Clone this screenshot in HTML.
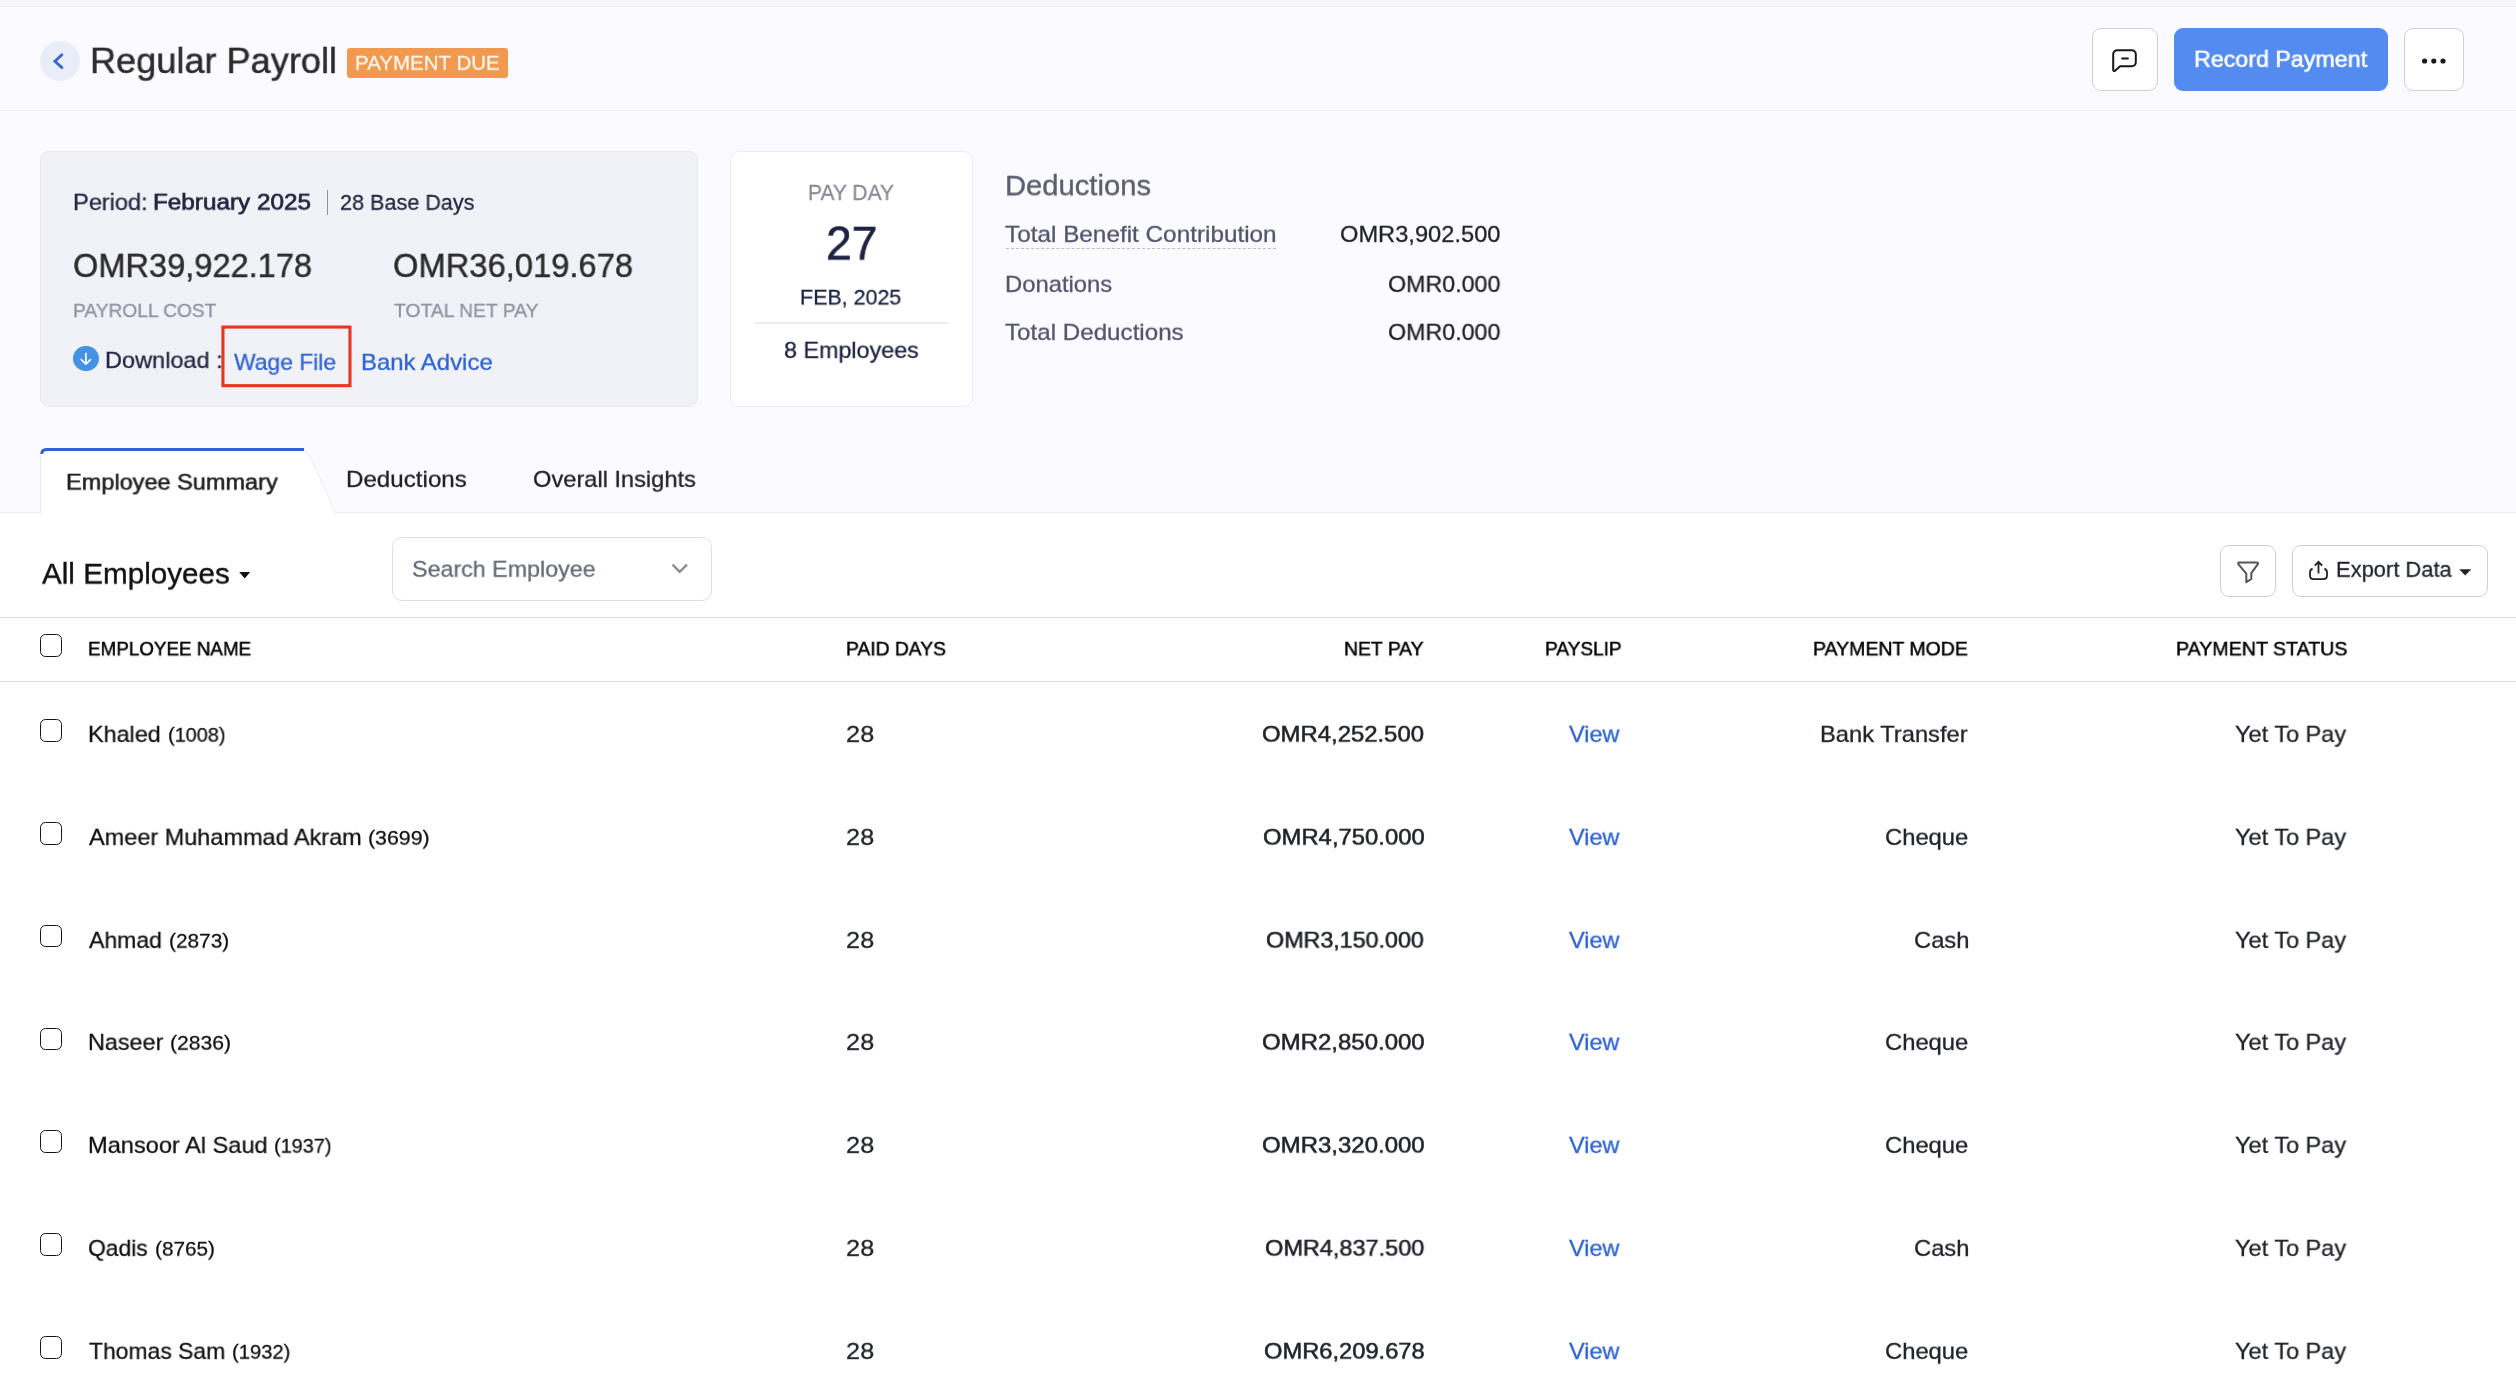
<!DOCTYPE html>
<html lang="en"><head><meta charset="utf-8"><title>Regular Payroll</title>
<style>
html,body{margin:0;padding:0;background:#fbfaff}
body{width:2516px;height:1396px;position:relative;overflow:hidden;font-family:"Liberation Sans",sans-serif}
.t{position:absolute;white-space:nowrap;line-height:1;display:inline-block;transform-origin:0 0;will-change:transform}
.a{position:absolute;box-sizing:border-box}
.cb{position:absolute;left:39.9px;width:21.9px;height:22.7px;box-sizing:border-box;border:1.7px solid #151515;border-radius:5.5px;background:#fff}
.btn{position:absolute;box-sizing:border-box;background:#fff;border:1.5px solid #cfcfd2;border-radius:9px}
svg{position:absolute;overflow:visible}
</style></head><body>
<div class="a" style="left:0;top:0;width:2516px;height:7px;background:#f6f6fb;border-bottom:1px solid #ececee"></div>
<div class="a" style="left:0;top:7px;width:2516px;height:1px;background:#fefeff"></div>
<div class="a" style="left:0;top:109px;width:2516px;height:3px;background:#fefeff"></div>
<div class="a" style="left:0;top:110px;width:2516px;height:1px;background:#ececec"></div>
<div class="a" style="left:40px;top:41px;width:40px;height:40px;border-radius:50%;background:#e8edf9"></div>
<svg style="left:40px;top:41px" width="40" height="40" viewBox="0 0 40 40"><path d="M21.9 13.7 L14.9 20.2 L21.9 26.6" fill="none" stroke="#3468d0" stroke-width="2.8" stroke-linecap="round" stroke-linejoin="miter"/></svg>
<div class="a" style="left:347px;top:48px;width:161px;height:30px;border-radius:3px;background:#f0994f"></div>
<div class="btn" style="left:2092px;top:28px;width:66px;height:63px"></div>
<svg style="left:2112px;top:49px" width="25" height="24" viewBox="0 0 25 24"><path d="M5.2 1.2 H19.8 a4 4 0 0 1 4 4 V13.2 a4 4 0 0 1 -4 4 H8.2 L3.2 21.6 Q1.2 22.8 1.2 20.4 V5.2 a4 4 0 0 1 4 -4 Z M10.2 9.6 H15.9" fill="none" stroke="#14171d" stroke-width="2" stroke-linecap="round" stroke-linejoin="round"/></svg>
<div class="a" style="left:2174px;top:28px;width:214px;height:63px;border-radius:9px;background:#538bf1"></div>
<div class="btn" style="left:2404px;top:28px;width:60px;height:63px"></div>
<svg style="left:2420px;top:55px" width="28" height="12" viewBox="0 0 28 12"><circle cx="4.6" cy="6" r="2.6" fill="#1a1a1a"/><circle cx="13.8" cy="6" r="2.6" fill="#1a1a1a"/><circle cx="23" cy="6" r="2.6" fill="#1a1a1a"/></svg>

<div class="a" style="left:40px;top:151px;width:657.6px;height:255.6px;border-radius:9px;background:#f1f2f8;border:1px solid #e8e9f0"></div>
<div class="a" style="left:327px;top:190px;width:1.3px;height:25px;background:#8f92a0"></div>
<div class="a" style="left:73px;top:345.8px;width:25.6px;height:25.6px;border-radius:50%;background:#4392e4"></div>
<svg style="left:73px;top:345.8px" width="25.6" height="25.6" viewBox="0 0 25.6 25.6"><path d="M12.9 7.4 V17.8 M8.3 13.6 L12.9 18.2 L17.5 13.6" fill="none" stroke="#fff" stroke-width="1.7" stroke-linecap="round" stroke-linejoin="round"/></svg>
<svg style="left:215px;top:320px" width="145" height="75" viewBox="215 320 145 75"><rect x="222.95" y="327.05" width="127" height="58.6" fill="none" stroke="#e8371b" stroke-width="3.1"/></svg>

<div class="a" style="left:730px;top:151px;width:242.6px;height:255.6px;border-radius:9px;background:#fff;border:1px solid #ececf3"></div>
<div class="a" style="left:755px;top:322px;width:193px;height:2px;background:#ececef"></div>
<div class="a" style="left:1005.5px;top:247.5px;width:270px;height:0;border-top:1.3px dashed #b9bccb"></div>

<div class="a" style="left:0;top:512px;width:2516px;height:884px;background:#fff;border-top:1px solid #ebebec"></div>
<svg style="left:0;top:440px" width="400" height="80" viewBox="0 440 400 80">
<path d="M40.3 513.2 V453 Q40.3 448 45.3 448 H304 V451 Q308.6 452.4 310.6 457.6 L335.2 512.4 V513.2 Z" fill="#fff"/>
<path d="M304 451.2 Q308.6 452.4 310.6 457.6 L335.2 512.4" fill="none" stroke="#ebebef" stroke-width="0.9"/>
<path d="M40.8 513 V454" fill="none" stroke="#e3e3e6" stroke-width="1"/>
<path d="M41.8 454 Q41.8 449.5 46.3 449.5 H304" fill="none" stroke="#2e62d6" stroke-width="3"/>
</svg>
<svg style="left:238.7px;top:571.7px" width="11.4" height="6.8" viewBox="0 0 11.4 6.8"><path d="M0.2 0.1 H11.2 L5.7 6.6 Z" fill="#111"/></svg>
<div class="a" style="left:392px;top:537px;width:320px;height:64px;border-radius:10px;background:#fff;border:1.5px solid #dddfe7"></div>
<svg style="left:670px;top:562px" width="20" height="14" viewBox="0 0 20 14"><path d="M2.6 2.6 L9.7 9.8 L16.9 2.6" fill="none" stroke="#8c8c8c" stroke-width="2.3"/></svg>
<div class="btn" style="left:2220px;top:545px;width:56px;height:52px"></div>
<svg style="left:2236px;top:560px" width="24" height="24" viewBox="0 0 24 24"><path d="M3.2 2.4 H20.8 Q22.6 2.6 21.8 4.2 L15.3 13.2 V19 L10.3 22.2 V13.6 L2.3 4.2 Q1.6 2.6 3.2 2.4 Z" fill="none" stroke="#555" stroke-width="2" stroke-linejoin="round"/></svg>
<div class="btn" style="left:2292px;top:545px;width:196px;height:52px"></div>
<svg style="left:2308px;top:560px" width="22" height="22" viewBox="0 0 22 22"><path d="M10.5 13.5 V1.8 M6.8 5.6 L10.5 1.8 L14.2 5.6 M4.6 8.6 Q2 9.6 2 12.4 V15.6 Q2 19.2 5.6 19.2 H15.4 Q19 19.2 19 15.6 V12.4 Q19 9.6 16.4 8.6" fill="none" stroke="#1f242c" stroke-width="1.8" stroke-linecap="butt" stroke-linejoin="miter"/></svg>
<svg style="left:2459px;top:569px" width="13" height="7" viewBox="0 0 13 7"><path d="M0.2 0.2 H12.2 L6.2 6.6 Z" fill="#1f242c"/></svg>
<div class="a" style="left:0;top:617px;width:2516px;height:1px;background:#dddddd"></div>
<div class="a" style="left:0;top:681px;width:2516px;height:1px;background:#dddddd"></div>
<div class="cb" style="top:634.1px"></div>
<div class="cb" style="top:719.10px"></div>
<div class="cb" style="top:821.93px"></div>
<div class="cb" style="top:924.76px"></div>
<div class="cb" style="top:1027.59px"></div>
<div class="cb" style="top:1130.42px"></div>
<div class="cb" style="top:1233.25px"></div>
<div class="cb" style="top:1336.08px"></div>
<span class="t" id="title" style="left:89.80px;top:42.58px;font-size:37.2px;color:#2c2c2c;-webkit-text-stroke:0.49px #2c2c2c;transform:scale(0.9715,0.9660);">Regular Payroll</span>
<span class="t" id="badge" style="left:354.94px;top:53.20px;font-size:20.29px;color:#fff5ea;-webkit-text-stroke:0.27px #fff5ea;transform:scale(1.0111,0.9782);">PAYMENT DUE</span>
<span class="t" id="recpay" style="left:2193.75px;top:47.78px;font-size:24.09px;color:#ffffff;-webkit-text-stroke:0.59px #ffffff;transform:scale(0.9653,0.9423);">Record Payment</span>
<span class="t" id="period" style="left:72.59px;top:190.82px;font-size:23.88px;color:#23273f;letter-spacing:-0.043px;-webkit-text-stroke:0.32px #23273f;transform:scale(0.9895,0.9486);">Period:</span>
<span class="t" id="feb" style="left:153.44px;top:191.29px;font-size:23.88px;color:#23273f;-webkit-text-stroke:0.75px #23273f;transform:scale(1.0172,0.9256);">February 2025</span>
<span class="t" id="base" style="left:339.86px;top:191.60px;font-size:21.98px;color:#23273f;-webkit-text-stroke:0.29px #23273f;transform:scale(0.9833,0.9890);">28 Base Days</span>
<span class="t" id="amt1" style="left:72.63px;top:248.92px;font-size:34.34px;color:#2c2c2c;-webkit-text-stroke:0.46px #2c2c2c;transform:scale(0.9491,0.9660);">OMR39,922.178</span>
<span class="t" id="amt2" style="left:392.63px;top:248.92px;font-size:34.34px;color:#2c2c2c;-webkit-text-stroke:0.46px #2c2c2c;transform:scale(0.9531,0.9660);">OMR36,019.678</span>
<span class="t" id="lbl1" style="left:72.69px;top:301.56px;font-size:19.44px;color:#8c90a0;-webkit-text-stroke:0.26px #8c90a0;transform:scale(0.9858,0.9381);">PAYROLL COST</span>
<span class="t" id="lbl2" style="left:393.68px;top:301.56px;font-size:19.44px;color:#8c90a0;-webkit-text-stroke:0.26px #8c90a0;transform:scale(0.9935,0.9381);">TOTAL NET PAY</span>
<span class="t" id="dl" style="left:105.25px;top:349.53px;font-size:23.67px;color:#23273f;letter-spacing:-0.012px;-webkit-text-stroke:0.31px #23273f;transform:scale(0.9950,0.9408);">Download :</span>
<span class="t" id="wage" style="left:234.15px;top:351.53px;font-size:23.67px;color:#2f64d6;letter-spacing:-0.016px;-webkit-text-stroke:0.31px #2f64d6;transform:scale(0.9680,0.9408);">Wage File</span>
<span class="t" id="bank" style="left:361.27px;top:351.53px;font-size:23.67px;color:#2f64d6;-webkit-text-stroke:0.31px #2f64d6;transform:scale(1.0116,0.9408);">Bank Advice</span>
<span class="t" id="payday" style="left:808.02px;top:181.59px;font-size:22.19px;color:#868b97;-webkit-text-stroke:0.29px #868b97;transform:scale(0.9469,0.9985);">PAY DAY</span>
<span class="t" id="d27" style="left:825.74px;top:219.31px;font-size:48.31px;color:#1c2242;-webkit-text-stroke:0.64px #1c2242;transform:scale(0.9579,0.9881);">27</span>
<span class="t" id="febd" style="left:799.80px;top:287.00px;font-size:21.56px;color:#1c2242;letter-spacing:-0.031px;-webkit-text-stroke:0.29px #1c2242;transform:scale(0.9963,0.9700);">FEB, 2025</span>
<span class="t" id="emp8" style="left:783.91px;top:339.93px;font-size:23.67px;color:#1c2242;letter-spacing:-0.011px;-webkit-text-stroke:0.31px #1c2242;transform:scale(0.9866,0.9408);">8 Employees</span>
<span class="t" id="dedh" style="left:1004.71px;top:172.39px;font-size:28.74px;color:#5c5f6f;-webkit-text-stroke:0.38px #5c5f6f;transform:scale(1.0155,0.9703);">Deductions</span>
<span class="t" id="tbc" style="left:1005.05px;top:223.85px;font-size:23.67px;color:#52566c;-webkit-text-stroke:0.31px #52566c;transform:scale(1.0276,0.9408);">Total Benefit Contribution</span>
<span class="t" id="don" style="left:1004.87px;top:273.93px;font-size:23.67px;color:#52566c;-webkit-text-stroke:0.31px #52566c;transform:scale(1.0067,0.9408);">Donations</span>
<span class="t" id="tded" style="left:1005.05px;top:321.93px;font-size:23.67px;color:#52566c;-webkit-text-stroke:0.31px #52566c;transform:scale(1.0216,0.9408);">Total Deductions</span>
<span class="t" id="v1" style="left:1339.85px;top:223.85px;font-size:23.67px;color:#1f2229;-webkit-text-stroke:0.31px #1f2229;transform:scale(1.0004,0.9408);">OMR3,902.500</span>
<span class="t" id="v2" style="left:1387.94px;top:273.93px;font-size:23.67px;color:#1f2229;letter-spacing:-0.041px;-webkit-text-stroke:0.31px #1f2229;transform:scale(0.9850,0.9408);">OMR0.000</span>
<span class="t" id="v3" style="left:1387.94px;top:321.93px;font-size:23.67px;color:#1f2229;letter-spacing:-0.041px;-webkit-text-stroke:0.31px #1f2229;transform:scale(0.9850,0.9408);">OMR0.000</span>
<span class="t" id="tab1" style="left:65.99px;top:471.70px;font-size:23.67px;color:#222222;-webkit-text-stroke:0.58px #222222;transform:scale(0.9938,0.9263);">Employee Summary</span>
<span class="t" id="tab2" style="left:345.67px;top:468.93px;font-size:23.67px;color:#222222;letter-spacing:0.020px;-webkit-text-stroke:0.31px #222222;transform:scale(1.0196,0.9408);">Deductions</span>
<span class="t" id="tab3" style="left:532.85px;top:468.93px;font-size:23.67px;color:#222222;-webkit-text-stroke:0.31px #222222;transform:scale(0.9987,0.9408);">Overall Insights</span>
<span class="t" id="allemp" style="left:41.67px;top:560.11px;font-size:29.16px;color:#111111;-webkit-text-stroke:0.39px #111111;transform:scale(1.0166,0.9841);">All Employees</span>
<span class="t" id="search" style="left:411.92px;top:558.91px;font-size:23.46px;color:#636a76;-webkit-text-stroke:0.31px #636a76;transform:scale(0.9921,0.9324);">Search Employee</span>
<span class="t" id="export" style="left:2336.44px;top:559.30px;font-size:21.98px;color:#1f242c;-webkit-text-stroke:0.29px #1f242c;transform:scale(0.9972,0.9890);">Export Data</span>
<span class="t" id="h1" style="left:88.07px;top:639.47px;font-size:20.29px;color:#000;-webkit-text-stroke:0.5px #000;transform:scale(0.9280,0.9626);">EMPLOYEE NAME</span>
<span class="t" id="h2" style="left:845.67px;top:639.47px;font-size:20.29px;color:#000;-webkit-text-stroke:0.5px #000;transform:scale(0.9490,0.9626);">PAID DAYS</span>
<span class="t" id="h3" style="left:1344.22px;top:639.47px;font-size:20.29px;color:#000;letter-spacing:-0.046px;-webkit-text-stroke:0.5px #000;transform:scale(0.9579,0.9626);">NET PAY</span>
<span class="t" id="h4" style="left:1544.52px;top:639.47px;font-size:20.29px;color:#000;letter-spacing:-0.026px;-webkit-text-stroke:0.5px #000;transform:scale(0.9422,0.9626);">PAYSLIP</span>
<span class="t" id="h5" style="left:1813.16px;top:639.47px;font-size:20.29px;color:#000;letter-spacing:-0.013px;-webkit-text-stroke:0.5px #000;transform:scale(0.9616,0.9626);">PAYMENT MODE</span>
<span class="t" id="h6" style="left:2176.07px;top:639.47px;font-size:20.29px;color:#000;-webkit-text-stroke:0.5px #000;transform:scale(0.9671,0.9626);">PAYMENT STATUS</span>
<span class="t" id="n0" style="left:88.33px;top:723.93px;font-size:23.67px;color:#111111;letter-spacing:0.009px;-webkit-text-stroke:0.31px #111111;transform:scale(0.9870,0.9408);">Khaled</span>
<span class="t" id="i0" style="left:167.80px;top:725.20px;font-size:20.29px;color:#111111;letter-spacing:-0.082px;-webkit-text-stroke:0.27px #111111;transform:scale(0.9876,0.9782);">(1008)</span>
<span class="t" id="p0" style="left:845.65px;top:723.93px;font-size:23.67px;color:#20242b;letter-spacing:0.287px;-webkit-text-stroke:0.31px #20242b;transform:scale(1.0676,0.9408);">28</span>
<span class="t" id="a0" style="left:1261.92px;top:724.30px;font-size:23.67px;color:#20242b;letter-spacing:-0.019px;-webkit-text-stroke:0.58px #20242b;transform:scale(1.0109,0.9263);">OMR4,252.500</span>
<span class="t" id="w0" style="left:1569.45px;top:723.93px;font-size:23.67px;color:#2f64d6;letter-spacing:-0.066px;-webkit-text-stroke:0.31px #2f64d6;transform:scale(0.9952,0.9408);">View</span>
<span class="t" id="m0" style="left:1820.27px;top:723.93px;font-size:23.67px;color:#20242b;-webkit-text-stroke:0.31px #20242b;transform:scale(1.0025,0.9408);">Bank Transfer</span>
<span class="t" id="s0" style="left:2235.27px;top:723.93px;font-size:23.67px;color:#20242b;letter-spacing:-0.025px;-webkit-text-stroke:0.31px #20242b;transform:scale(0.9958,0.9408);">Yet To Pay</span>
<span class="t" id="n1" style="left:89.02px;top:826.93px;font-size:23.67px;color:#111111;-webkit-text-stroke:0.31px #111111;transform:scale(0.9925,0.9408);">Ameer Muhammad Akram</span>
<span class="t" id="i1" style="left:368.01px;top:828.20px;font-size:20.29px;color:#111111;letter-spacing:-0.023px;-webkit-text-stroke:0.27px #111111;transform:scale(1.0543,0.9782);">(3699)</span>
<span class="t" id="p1" style="left:845.65px;top:826.93px;font-size:23.67px;color:#20242b;letter-spacing:0.287px;-webkit-text-stroke:0.31px #20242b;transform:scale(1.0676,0.9408);">28</span>
<span class="t" id="a1" style="left:1262.72px;top:827.30px;font-size:23.67px;color:#20242b;letter-spacing:0.009px;-webkit-text-stroke:0.58px #20242b;transform:scale(1.0072,0.9263);">OMR4,750.000</span>
<span class="t" id="w1" style="left:1569.45px;top:826.93px;font-size:23.67px;color:#2f64d6;letter-spacing:-0.066px;-webkit-text-stroke:0.31px #2f64d6;transform:scale(0.9952,0.9408);">View</span>
<span class="t" id="m1" style="left:1885.08px;top:826.93px;font-size:23.67px;color:#20242b;letter-spacing:-0.029px;-webkit-text-stroke:0.31px #20242b;transform:scale(1.0072,0.9408);">Cheque</span>
<span class="t" id="s1" style="left:2235.27px;top:826.93px;font-size:23.67px;color:#20242b;letter-spacing:-0.025px;-webkit-text-stroke:0.31px #20242b;transform:scale(0.9958,0.9408);">Yet To Pay</span>
<span class="t" id="n2" style="left:89.43px;top:929.93px;font-size:23.67px;color:#111111;letter-spacing:-0.086px;-webkit-text-stroke:0.31px #111111;transform:scale(0.9767,0.9408);">Ahmad</span>
<span class="t" id="i2" style="left:168.78px;top:931.20px;font-size:20.29px;color:#111111;-webkit-text-stroke:0.27px #111111;transform:scale(1.0277,0.9782);">(2873)</span>
<span class="t" id="p2" style="left:845.65px;top:929.93px;font-size:23.67px;color:#20242b;letter-spacing:0.287px;-webkit-text-stroke:0.31px #20242b;transform:scale(1.0676,0.9408);">28</span>
<span class="t" id="a2" style="left:1266.36px;top:930.30px;font-size:23.67px;color:#20242b;letter-spacing:-0.016px;-webkit-text-stroke:0.58px #20242b;transform:scale(0.9851,0.9263);">OMR3,150.000</span>
<span class="t" id="w2" style="left:1569.45px;top:929.93px;font-size:23.67px;color:#2f64d6;letter-spacing:-0.066px;-webkit-text-stroke:0.31px #2f64d6;transform:scale(0.9952,0.9408);">View</span>
<span class="t" id="m2" style="left:1913.79px;top:929.93px;font-size:23.67px;color:#20242b;-webkit-text-stroke:0.31px #20242b;transform:scale(1.0043,0.9408);">Cash</span>
<span class="t" id="s2" style="left:2235.27px;top:929.93px;font-size:23.67px;color:#20242b;letter-spacing:-0.025px;-webkit-text-stroke:0.31px #20242b;transform:scale(0.9958,0.9408);">Yet To Pay</span>
<span class="t" id="n3" style="left:88.33px;top:1031.93px;font-size:23.67px;color:#111111;-webkit-text-stroke:0.31px #111111;transform:scale(0.9867,0.9408);">Naseer</span>
<span class="t" id="i3" style="left:169.78px;top:1033.20px;font-size:20.29px;color:#111111;-webkit-text-stroke:0.27px #111111;transform:scale(1.0410,0.9782);">(2836)</span>
<span class="t" id="p3" style="left:845.65px;top:1031.93px;font-size:23.67px;color:#20242b;letter-spacing:0.287px;-webkit-text-stroke:0.31px #20242b;transform:scale(1.0676,0.9408);">28</span>
<span class="t" id="a3" style="left:1261.72px;top:1032.30px;font-size:23.67px;color:#20242b;letter-spacing:0.006px;-webkit-text-stroke:0.58px #20242b;transform:scale(1.0135,0.9263);">OMR2,850.000</span>
<span class="t" id="w3" style="left:1569.45px;top:1031.93px;font-size:23.67px;color:#2f64d6;letter-spacing:-0.066px;-webkit-text-stroke:0.31px #2f64d6;transform:scale(0.9952,0.9408);">View</span>
<span class="t" id="m3" style="left:1885.08px;top:1031.93px;font-size:23.67px;color:#20242b;letter-spacing:-0.029px;-webkit-text-stroke:0.31px #20242b;transform:scale(1.0072,0.9408);">Cheque</span>
<span class="t" id="s3" style="left:2235.27px;top:1031.93px;font-size:23.67px;color:#20242b;letter-spacing:-0.025px;-webkit-text-stroke:0.31px #20242b;transform:scale(0.9958,0.9408);">Yet To Pay</span>
<span class="t" id="n4" style="left:88.25px;top:1134.93px;font-size:23.67px;color:#111111;letter-spacing:-0.013px;-webkit-text-stroke:0.31px #111111;transform:scale(0.9981,0.9408);">Mansoor Al Saud</span>
<span class="t" id="i4" style="left:273.55px;top:1136.20px;font-size:20.29px;color:#111111;letter-spacing:-0.082px;-webkit-text-stroke:0.27px #111111;transform:scale(0.9876,0.9782);">(1937)</span>
<span class="t" id="p4" style="left:845.65px;top:1134.93px;font-size:23.67px;color:#20242b;letter-spacing:0.287px;-webkit-text-stroke:0.31px #20242b;transform:scale(1.0676,0.9408);">28</span>
<span class="t" id="a4" style="left:1261.72px;top:1135.30px;font-size:23.67px;color:#20242b;letter-spacing:0.006px;-webkit-text-stroke:0.58px #20242b;transform:scale(1.0135,0.9263);">OMR3,320.000</span>
<span class="t" id="w4" style="left:1569.45px;top:1134.93px;font-size:23.67px;color:#2f64d6;letter-spacing:-0.066px;-webkit-text-stroke:0.31px #2f64d6;transform:scale(0.9952,0.9408);">View</span>
<span class="t" id="m4" style="left:1885.08px;top:1134.93px;font-size:23.67px;color:#20242b;letter-spacing:-0.029px;-webkit-text-stroke:0.31px #20242b;transform:scale(1.0072,0.9408);">Cheque</span>
<span class="t" id="s4" style="left:2235.27px;top:1134.93px;font-size:23.67px;color:#20242b;letter-spacing:-0.025px;-webkit-text-stroke:0.31px #20242b;transform:scale(0.9958,0.9408);">Yet To Pay</span>
<span class="t" id="n5" style="left:88.17px;top:1237.93px;font-size:23.67px;color:#111111;letter-spacing:-0.033px;-webkit-text-stroke:0.31px #111111;transform:scale(0.9690,0.9408);">Qadis</span>
<span class="t" id="i5" style="left:155.28px;top:1239.20px;font-size:20.29px;color:#111111;-webkit-text-stroke:0.27px #111111;transform:scale(1.0232,0.9782);">(8765)</span>
<span class="t" id="p5" style="left:845.65px;top:1237.93px;font-size:23.67px;color:#20242b;letter-spacing:0.287px;-webkit-text-stroke:0.31px #20242b;transform:scale(1.0676,0.9408);">28</span>
<span class="t" id="a5" style="left:1264.73px;top:1238.30px;font-size:23.67px;color:#20242b;letter-spacing:-0.023px;-webkit-text-stroke:0.58px #20242b;transform:scale(0.9946,0.9263);">OMR4,837.500</span>
<span class="t" id="w5" style="left:1569.45px;top:1237.93px;font-size:23.67px;color:#2f64d6;letter-spacing:-0.066px;-webkit-text-stroke:0.31px #2f64d6;transform:scale(0.9952,0.9408);">View</span>
<span class="t" id="m5" style="left:1913.79px;top:1237.93px;font-size:23.67px;color:#20242b;-webkit-text-stroke:0.31px #20242b;transform:scale(1.0043,0.9408);">Cash</span>
<span class="t" id="s5" style="left:2235.27px;top:1237.93px;font-size:23.67px;color:#20242b;letter-spacing:-0.025px;-webkit-text-stroke:0.31px #20242b;transform:scale(0.9958,0.9408);">Yet To Pay</span>
<span class="t" id="n6" style="left:88.85px;top:1340.93px;font-size:23.67px;color:#111111;-webkit-text-stroke:0.31px #111111;transform:scale(0.9684,0.9408);">Thomas Sam</span>
<span class="t" id="i6" style="left:232.28px;top:1342.20px;font-size:20.29px;color:#111111;-webkit-text-stroke:0.27px #111111;transform:scale(0.9965,0.9782);">(1932)</span>
<span class="t" id="p6" style="left:845.65px;top:1340.93px;font-size:23.67px;color:#20242b;letter-spacing:0.287px;-webkit-text-stroke:0.31px #20242b;transform:scale(1.0676,0.9408);">28</span>
<span class="t" id="a6" style="left:1263.73px;top:1341.30px;font-size:23.67px;color:#20242b;letter-spacing:0.008px;-webkit-text-stroke:0.58px #20242b;transform:scale(1.0013,0.9263);">OMR6,209.678</span>
<span class="t" id="w6" style="left:1569.45px;top:1340.93px;font-size:23.67px;color:#2f64d6;letter-spacing:-0.066px;-webkit-text-stroke:0.31px #2f64d6;transform:scale(0.9952,0.9408);">View</span>
<span class="t" id="m6" style="left:1885.08px;top:1340.93px;font-size:23.67px;color:#20242b;letter-spacing:-0.029px;-webkit-text-stroke:0.31px #20242b;transform:scale(1.0072,0.9408);">Cheque</span>
<span class="t" id="s6" style="left:2235.27px;top:1340.93px;font-size:23.67px;color:#20242b;letter-spacing:-0.025px;-webkit-text-stroke:0.31px #20242b;transform:scale(0.9958,0.9408);">Yet To Pay</span>
</body></html>
